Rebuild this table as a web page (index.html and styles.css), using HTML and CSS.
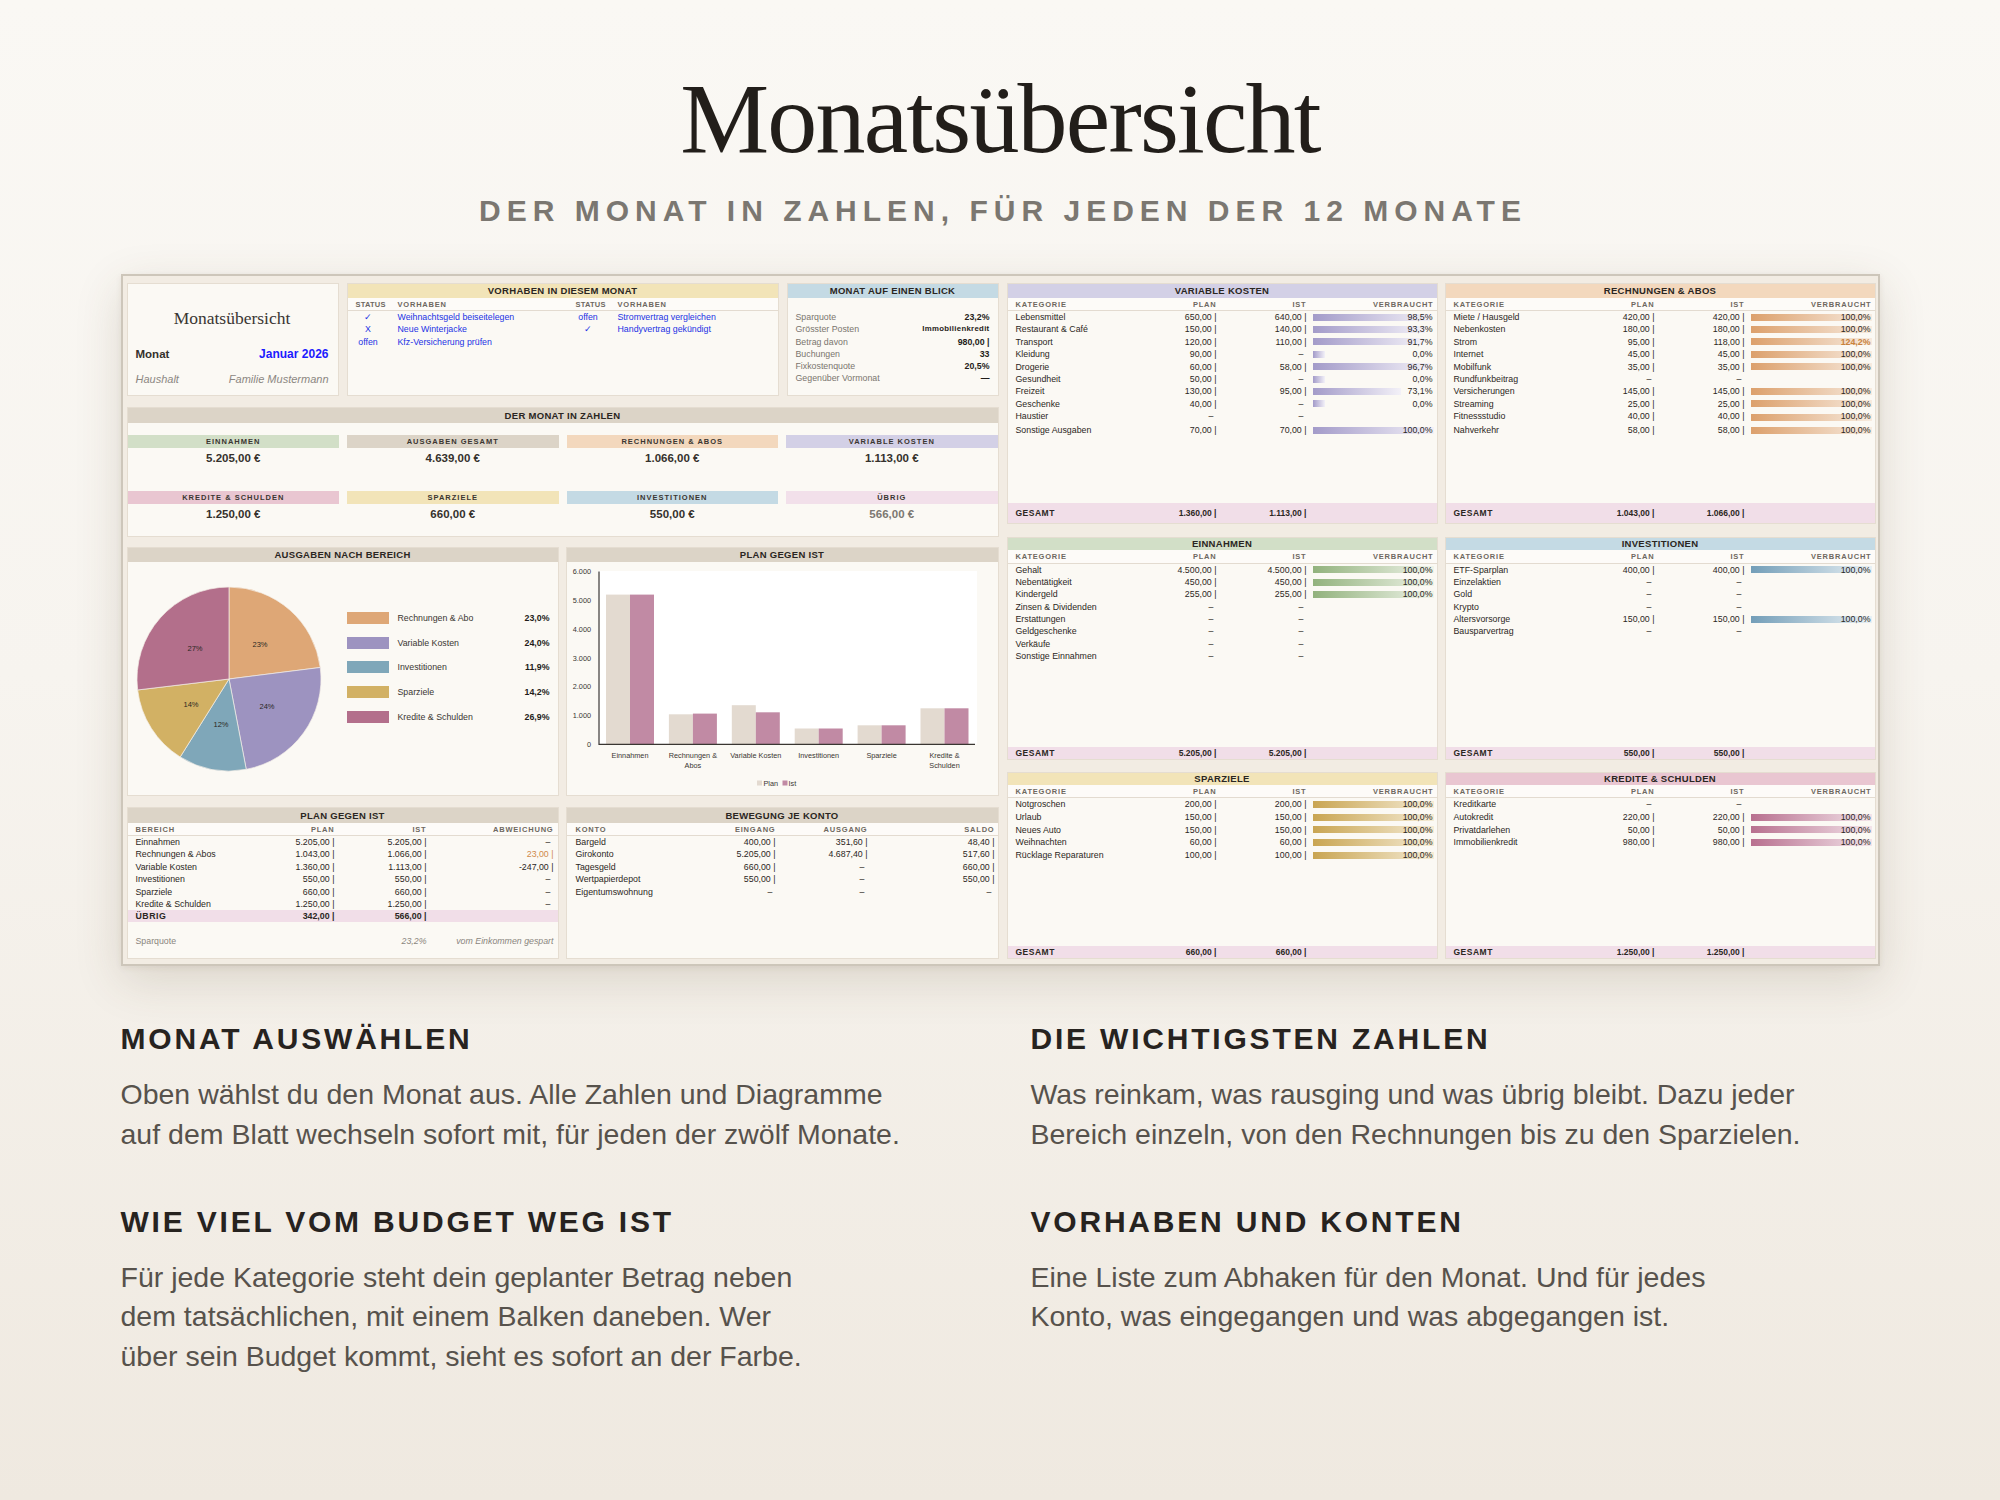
FILE: index.html
```html
<!DOCTYPE html>
<html lang="de">
<head>
<meta charset="utf-8">
<title>Monatsübersicht</title>
<link rel="stylesheet" href="styles.css">
</head>
<body>
<header class="hero">
  <h1 class="title">Monatsübersicht</h1>
  <p class="subtitle">DER MONAT IN ZAHLEN, FÜR JEDEN DER 12 MONATE</p>
</header>

<main class="sheet">
  <div class="left">
    <div class="row1">
      <section class="panel titlebox">
        <div class="tb-title">Monatsübersicht</div>
        <div class="tb-month"><span>Monat</span><span class="blue">Januar 2026</span></div>
        <div class="tb-house"><span>Haushalt</span><span>Familie Mustermann</span></div>
      </section>

      <section class="panel vorhaben">
        <div class="ph t-yel">VORHABEN IN DIESEM MONAT</div>
        <div class="vh-body">
          <div class="vh-half first">
            <div class="vh-row ch"><span class="st-h">STATUS</span><span>VORHABEN</span></div>
            <div class="vh-row"><span class="st">✓</span><span>Weihnachtsgeld beiseitelegen</span></div>
            <div class="vh-row"><span class="st">X</span><span>Neue Winterjacke</span></div>
            <div class="vh-row"><span class="st">offen</span><span>Kfz-Versicherung prüfen</span></div>
          </div>
          <div class="vh-half second">
            <div class="vh-row ch"><span class="st-h">STATUS</span><span>VORHABEN</span></div>
            <div class="vh-row"><span class="st">offen</span><span>Stromvertrag vergleichen</span></div>
            <div class="vh-row"><span class="st">✓</span><span>Handyvertrag gekündigt</span></div>
          </div>
        </div>
      </section>

      <section class="panel blick">
        <div class="ph t-blue">MONAT AUF EINEN BLICK</div>
        <div class="bl-body">
          <div class="bl-row"><span>Sparquote</span><b>23,2%</b></div>
          <div class="bl-row"><span>Grösster Posten</span><b class="small">Immobilienkredit</b></div>
          <div class="bl-row"><span>Betrag davon</span><b>980,00 |</b></div>
          <div class="bl-row"><span>Buchungen</span><b>33</b></div>
          <div class="bl-row"><span>Fixkostenquote</span><b>20,5%</b></div>
          <div class="bl-row"><span>Gegenüber Vormonat</span><b>—</b></div>
        </div>
      </section>
    </div>

    <section class="panel zahlen">
      <div class="ph big">DER MONAT IN ZAHLEN</div>
      <div class="cards">
        <div class="card"><div class="cl c-ein">EINNAHMEN</div><div class="cv">5.205,00 €</div></div>
        <div class="card"><div class="cl c-aus">AUSGABEN GESAMT</div><div class="cv">4.639,00 €</div></div>
        <div class="card"><div class="cl c-rech">RECHNUNGEN &amp; ABOS</div><div class="cv">1.066,00 €</div></div>
        <div class="card"><div class="cl c-var">VARIABLE KOSTEN</div><div class="cv">1.113,00 €</div></div>
        <div class="card"><div class="cl c-kred">KREDITE &amp; SCHULDEN</div><div class="cv">1.250,00 €</div></div>
        <div class="card"><div class="cl c-spar">SPARZIELE</div><div class="cv">660,00 €</div></div>
        <div class="card"><div class="cl c-inv">INVESTITIONEN</div><div class="cv">550,00 €</div></div>
        <div class="card"><div class="cl c-ueb">ÜBRIG</div><div class="cv muted">566,00 €</div></div>
      </div>
    </section>

    <div class="row2">
      <section class="panel ausgaben">
        <div class="ph">AUSGABEN NACH BEREICH</div>
        <div class="pie-body">
          <svg class="pie" viewBox="0 0 210 233" xmlns="http://www.w3.org/2000/svg">
            <g stroke="#f4eee6" stroke-width="0.7">
              <path d="M101,117 L101,25 A92,92 0 0 1 192.27,105.47 Z" fill="#dea776"/>
              <path d="M101,117 L192.27,105.47 A92,92 0 0 1 118.24,207.37 Z" fill="#9d93c0"/>
              <path d="M101,117 L118.24,207.37 A92,92 0 0 1 52.19,194.99 Z" fill="#7fa7b9"/>
              <path d="M101,117 L52.19,194.99 A92,92 0 0 1 9.66,127.96 Z" fill="#d2b164"/>
              <path d="M101,117 L9.66,127.96 A92,92 0 0 1 101,25 Z" fill="#b36f8b"/>
            </g>
            <g class="pie-lbl" text-anchor="middle">
              <text x="132" y="84.5">23%</text>
              <text x="139" y="146.5">24%</text>
              <text x="93" y="164.5">12%</text>
              <text x="63" y="144.5">14%</text>
              <text x="67" y="88.5">27%</text>
            </g>
          </svg>
          <ul class="legend">
            <li><i class="sw sw1"></i><span>Rechnungen &amp; Abo</span><b>23,0%</b></li>
            <li><i class="sw sw2"></i><span>Variable Kosten</span><b>24,0%</b></li>
            <li><i class="sw sw3"></i><span>Investitionen</span><b>11,9%</b></li>
            <li><i class="sw sw4"></i><span>Sparziele</span><b>14,2%</b></li>
            <li><i class="sw sw5"></i><span>Kredite &amp; Schulden</span><b>26,9%</b></li>
          </ul>
        </div>
      </section>

      <section class="panel chart">
        <div class="ph">PLAN GEGEN IST</div>
        <svg class="bars" viewBox="0 0 431 233" xmlns="http://www.w3.org/2000/svg">
          <rect x="31" y="9" width="379" height="173.3" fill="#ffffff"/>
          <g class="ax" text-anchor="end">
            <text x="24" y="12.2">6.000</text>
            <text x="24" y="41">5.000</text>
            <text x="24" y="69.7">4.000</text>
            <text x="24" y="98.5">3.000</text>
            <text x="24" y="127.3">2.000</text>
            <text x="24" y="156">1.000</text>
            <text x="24" y="184.8">0</text>
          </g>
          <g fill="#e3dad0">
            <rect x="39" y="32.6" width="24" height="149.7"/>
            <rect x="101.9" y="152.3" width="24" height="30"/>
            <rect x="164.8" y="143.2" width="24" height="39.1"/>
            <rect x="227.7" y="166.5" width="24" height="15.8"/>
            <rect x="290.6" y="163.3" width="24" height="19"/>
            <rect x="353.5" y="146.3" width="24" height="36"/>
          </g>
          <g fill="#c18aa4">
            <rect x="63" y="32.6" width="24" height="149.7"/>
            <rect x="125.9" y="151.6" width="24" height="30.7"/>
            <rect x="188.8" y="150.3" width="24" height="32"/>
            <rect x="251.7" y="166.5" width="24" height="15.8"/>
            <rect x="314.6" y="163.3" width="24" height="19"/>
            <rect x="377.5" y="146.3" width="24" height="36"/>
          </g>
          <path d="M32,9.5 V182.3 H408" fill="none" stroke="#3a3632" stroke-width="1.2"/>
          <g class="ax" text-anchor="middle">
            <text x="63" y="195.5">Einnahmen</text>
            <text x="125.9" y="195.5">Rechnungen &amp;</text>
            <text x="125.9" y="205.8">Abos</text>
            <text x="188.8" y="195.5">Variable Kosten</text>
            <text x="251.7" y="195.5">Investitionen</text>
            <text x="314.6" y="195.5">Sparziele</text>
            <text x="377.5" y="195.5">Kredite &amp;</text>
            <text x="377.5" y="205.8">Schulden</text>
          </g>
          <rect x="190" y="218.5" width="5" height="5" fill="#e3dad0"/>
          <text class="ax" x="196.5" y="223.8">Plan</text>
          <rect x="215.5" y="218.5" width="5" height="5" fill="#c18aa4"/>
          <text class="ax" x="221.5" y="223.8">Ist</text>
        </svg>
      </section>
    </div>

    <div class="row2">
      <section class="panel lt pgi">
        <div class="ph big">PLAN GEGEN IST</div>
        <div class="ch"><span>BEREICH</span><span class="r">PLAN</span><span class="r">IST</span><span class="r">ABWEICHUNG</span></div>
        <div class="tr"><span>Einnahmen</span><span class="r">5.205,00 |</span><span class="r">5.205,00 |</span><span class="r d">–</span></div>
        <div class="tr"><span>Rechnungen &amp; Abos</span><span class="r">1.043,00 |</span><span class="r">1.066,00 |</span><span class="r warn">23,00 |</span></div>
        <div class="tr"><span>Variable Kosten</span><span class="r">1.360,00 |</span><span class="r">1.113,00 |</span><span class="r">-247,00 |</span></div>
        <div class="tr"><span>Investitionen</span><span class="r">550,00 |</span><span class="r">550,00 |</span><span class="r d">–</span></div>
        <div class="tr"><span>Sparziele</span><span class="r">660,00 |</span><span class="r">660,00 |</span><span class="r d">–</span></div>
        <div class="tr"><span>Kredite &amp; Schulden</span><span class="r">1.250,00 |</span><span class="r">1.250,00 |</span><span class="r d">–</span></div>
        <div class="tr ub"><span>ÜBRIG</span><span class="r">342,00 |</span><span class="r">566,00 |</span><span></span></div>
        <div class="tr sq"><span>Sparquote</span><span></span><span class="r it">23,2%</span><span class="r it">vom Einkommen gespart</span></div>
      </section>

      <section class="panel lt konto">
        <div class="ph big">BEWEGUNG JE KONTO</div>
        <div class="ch"><span>KONTO</span><span class="r">EINGANG</span><span class="r">AUSGANG</span><span class="r">SALDO</span></div>
        <div class="tr"><span>Bargeld</span><span class="r">400,00 |</span><span class="r">351,60 |</span><span class="r">48,40 |</span></div>
        <div class="tr"><span>Girokonto</span><span class="r">5.205,00 |</span><span class="r">4.687,40 |</span><span class="r">517,60 |</span></div>
        <div class="tr"><span>Tagesgeld</span><span class="r">660,00 |</span><span class="r d">–</span><span class="r">660,00 |</span></div>
        <div class="tr"><span>Wertpapierdepot</span><span class="r">550,00 |</span><span class="r d">–</span><span class="r">550,00 |</span></div>
        <div class="tr"><span>Eigentumswohnung</span><span class="r d">–</span><span class="r d">–</span><span class="r d">–</span></div>
      </section>
    </div>
  </div>

  <div class="right">
    <section class="panel rt t-var top">
      <div class="ph">VARIABLE KOSTEN</div>
      <div class="ch"><span>KATEGORIE</span><span class="r">PLAN</span><span class="r">IST</span><span class="r">VERBRAUCHT</span></div>
      <div class="tr"><span>Lebensmittel</span><span class="r">650,00 |</span><span class="r">640,00 |</span><span class="vb"><i class="bar" style="width:98.5%"></i><em class="pct">98,5%</em></span></div>
      <div class="tr"><span>Restaurant &amp; Café</span><span class="r">150,00 |</span><span class="r">140,00 |</span><span class="vb"><i class="bar" style="width:93.3%"></i><em class="pct">93,3%</em></span></div>
      <div class="tr"><span>Transport</span><span class="r">120,00 |</span><span class="r">110,00 |</span><span class="vb"><i class="bar" style="width:91.7%"></i><em class="pct">91,7%</em></span></div>
      <div class="tr"><span>Kleidung</span><span class="r">90,00 |</span><span class="r d">–</span><span class="vb"><i class="bar" style="width:10%"></i><em class="pct">0,0%</em></span></div>
      <div class="tr"><span>Drogerie</span><span class="r">60,00 |</span><span class="r">58,00 |</span><span class="vb"><i class="bar" style="width:96.7%"></i><em class="pct">96,7%</em></span></div>
      <div class="tr"><span>Gesundheit</span><span class="r">50,00 |</span><span class="r d">–</span><span class="vb"><i class="bar" style="width:10%"></i><em class="pct">0,0%</em></span></div>
      <div class="tr"><span>Freizeit</span><span class="r">130,00 |</span><span class="r">95,00 |</span><span class="vb"><i class="bar" style="width:73.1%"></i><em class="pct">73,1%</em></span></div>
      <div class="tr"><span>Geschenke</span><span class="r">40,00 |</span><span class="r d">–</span><span class="vb"><i class="bar" style="width:10%"></i><em class="pct">0,0%</em></span></div>
      <div class="tr tall"><span>Haustier</span><span class="r d">–</span><span class="r d">–</span><span></span></div>
      <div class="tr tall"><span>Sonstige Ausgaben</span><span class="r">70,00 |</span><span class="r">70,00 |</span><span class="vb"><i class="bar" style="width:100%"></i><em class="pct">100,0%</em></span></div>
      <div class="sum"><span>GESAMT</span><span class="r">1.360,00 |</span><span class="r">1.113,00 |</span><span></span></div>
    </section>

    <section class="panel rt t-rech top">
      <div class="ph">RECHNUNGEN &amp; ABOS</div>
      <div class="ch"><span>KATEGORIE</span><span class="r">PLAN</span><span class="r">IST</span><span class="r">VERBRAUCHT</span></div>
      <div class="tr"><span>Miete / Hausgeld</span><span class="r">420,00 |</span><span class="r">420,00 |</span><span class="vb"><i class="bar" style="width:100%"></i><em class="pct">100,0%</em></span></div>
      <div class="tr"><span>Nebenkosten</span><span class="r">180,00 |</span><span class="r">180,00 |</span><span class="vb"><i class="bar" style="width:100%"></i><em class="pct">100,0%</em></span></div>
      <div class="tr"><span>Strom</span><span class="r">95,00 |</span><span class="r">118,00 |</span><span class="vb"><i class="bar" style="width:100%"></i><em class="pct over">124,2%</em></span></div>
      <div class="tr"><span>Internet</span><span class="r">45,00 |</span><span class="r">45,00 |</span><span class="vb"><i class="bar" style="width:100%"></i><em class="pct">100,0%</em></span></div>
      <div class="tr"><span>Mobilfunk</span><span class="r">35,00 |</span><span class="r">35,00 |</span><span class="vb"><i class="bar" style="width:100%"></i><em class="pct">100,0%</em></span></div>
      <div class="tr"><span>Rundfunkbeitrag</span><span class="r d">–</span><span class="r d">–</span><span></span></div>
      <div class="tr"><span>Versicherungen</span><span class="r">145,00 |</span><span class="r">145,00 |</span><span class="vb"><i class="bar" style="width:100%"></i><em class="pct">100,0%</em></span></div>
      <div class="tr"><span>Streaming</span><span class="r">25,00 |</span><span class="r">25,00 |</span><span class="vb"><i class="bar" style="width:100%"></i><em class="pct">100,0%</em></span></div>
      <div class="tr tall"><span>Fitnessstudio</span><span class="r">40,00 |</span><span class="r">40,00 |</span><span class="vb"><i class="bar" style="width:100%"></i><em class="pct">100,0%</em></span></div>
      <div class="tr tall"><span>Nahverkehr</span><span class="r">58,00 |</span><span class="r">58,00 |</span><span class="vb"><i class="bar" style="width:100%"></i><em class="pct">100,0%</em></span></div>
      <div class="sum"><span>GESAMT</span><span class="r">1.043,00 |</span><span class="r">1.066,00 |</span><span></span></div>
    </section>

    <section class="panel rt t-ein mid">
      <div class="ph">EINNAHMEN</div>
      <div class="ch"><span>KATEGORIE</span><span class="r">PLAN</span><span class="r">IST</span><span class="r">VERBRAUCHT</span></div>
      <div class="tr"><span>Gehalt</span><span class="r">4.500,00 |</span><span class="r">4.500,00 |</span><span class="vb"><i class="bar" style="width:100%"></i><em class="pct">100,0%</em></span></div>
      <div class="tr"><span>Nebentätigkeit</span><span class="r">450,00 |</span><span class="r">450,00 |</span><span class="vb"><i class="bar" style="width:100%"></i><em class="pct">100,0%</em></span></div>
      <div class="tr"><span>Kindergeld</span><span class="r">255,00 |</span><span class="r">255,00 |</span><span class="vb"><i class="bar" style="width:100%"></i><em class="pct">100,0%</em></span></div>
      <div class="tr"><span>Zinsen &amp; Dividenden</span><span class="r d">–</span><span class="r d">–</span><span></span></div>
      <div class="tr"><span>Erstattungen</span><span class="r d">–</span><span class="r d">–</span><span></span></div>
      <div class="tr"><span>Geldgeschenke</span><span class="r d">–</span><span class="r d">–</span><span></span></div>
      <div class="tr"><span>Verkäufe</span><span class="r d">–</span><span class="r d">–</span><span></span></div>
      <div class="tr"><span>Sonstige Einnahmen</span><span class="r d">–</span><span class="r d">–</span><span></span></div>
      <div class="sum"><span>GESAMT</span><span class="r">5.205,00 |</span><span class="r">5.205,00 |</span><span></span></div>
    </section>

    <section class="panel rt t-inv mid">
      <div class="ph">INVESTITIONEN</div>
      <div class="ch"><span>KATEGORIE</span><span class="r">PLAN</span><span class="r">IST</span><span class="r">VERBRAUCHT</span></div>
      <div class="tr"><span>ETF-Sparplan</span><span class="r">400,00 |</span><span class="r">400,00 |</span><span class="vb"><i class="bar" style="width:100%"></i><em class="pct">100,0%</em></span></div>
      <div class="tr"><span>Einzelaktien</span><span class="r d">–</span><span class="r d">–</span><span></span></div>
      <div class="tr"><span>Gold</span><span class="r d">–</span><span class="r d">–</span><span></span></div>
      <div class="tr"><span>Krypto</span><span class="r d">–</span><span class="r d">–</span><span></span></div>
      <div class="tr"><span>Altersvorsorge</span><span class="r">150,00 |</span><span class="r">150,00 |</span><span class="vb"><i class="bar" style="width:100%"></i><em class="pct">100,0%</em></span></div>
      <div class="tr"><span>Bausparvertrag</span><span class="r d">–</span><span class="r d">–</span><span></span></div>
      <div class="sum"><span>GESAMT</span><span class="r">550,00 |</span><span class="r">550,00 |</span><span></span></div>
    </section>

    <section class="panel rt t-spar low">
      <div class="ph">SPARZIELE</div>
      <div class="ch"><span>KATEGORIE</span><span class="r">PLAN</span><span class="r">IST</span><span class="r">VERBRAUCHT</span></div>
      <div class="tr"><span>Notgroschen</span><span class="r">200,00 |</span><span class="r">200,00 |</span><span class="vb"><i class="bar" style="width:100%"></i><em class="pct">100,0%</em></span></div>
      <div class="tr"><span>Urlaub</span><span class="r">150,00 |</span><span class="r">150,00 |</span><span class="vb"><i class="bar" style="width:100%"></i><em class="pct">100,0%</em></span></div>
      <div class="tr"><span>Neues Auto</span><span class="r">150,00 |</span><span class="r">150,00 |</span><span class="vb"><i class="bar" style="width:100%"></i><em class="pct">100,0%</em></span></div>
      <div class="tr"><span>Weihnachten</span><span class="r">60,00 |</span><span class="r">60,00 |</span><span class="vb"><i class="bar" style="width:100%"></i><em class="pct">100,0%</em></span></div>
      <div class="tr"><span>Rücklage Reparaturen</span><span class="r">100,00 |</span><span class="r">100,00 |</span><span class="vb"><i class="bar" style="width:100%"></i><em class="pct">100,0%</em></span></div>
      <div class="sum"><span>GESAMT</span><span class="r">660,00 |</span><span class="r">660,00 |</span><span></span></div>
    </section>

    <section class="panel rt t-kred low">
      <div class="ph">KREDITE &amp; SCHULDEN</div>
      <div class="ch"><span>KATEGORIE</span><span class="r">PLAN</span><span class="r">IST</span><span class="r">VERBRAUCHT</span></div>
      <div class="tr"><span>Kreditkarte</span><span class="r d">–</span><span class="r d">–</span><span></span></div>
      <div class="tr"><span>Autokredit</span><span class="r">220,00 |</span><span class="r">220,00 |</span><span class="vb"><i class="bar" style="width:100%"></i><em class="pct">100,0%</em></span></div>
      <div class="tr"><span>Privatdarlehen</span><span class="r">50,00 |</span><span class="r">50,00 |</span><span class="vb"><i class="bar" style="width:100%"></i><em class="pct">100,0%</em></span></div>
      <div class="tr"><span>Immobilienkredit</span><span class="r">980,00 |</span><span class="r">980,00 |</span><span class="vb"><i class="bar" style="width:100%"></i><em class="pct">100,0%</em></span></div>
      <div class="sum"><span>GESAMT</span><span class="r">1.250,00 |</span><span class="r">1.250,00 |</span><span></span></div>
    </section>
  </div>
</main>

<section class="features">
  <div class="feat">
    <h3>MONAT AUSWÄHLEN</h3>
    <p>Oben wählst du den Monat aus. Alle Zahlen und Diagramme<br>auf dem Blatt wechseln sofort mit, für jeden der zwölf Monate.</p>
  </div>
  <div class="feat">
    <h3>DIE WICHTIGSTEN ZAHLEN</h3>
    <p>Was reinkam, was rausging und was übrig bleibt. Dazu jeder<br>Bereich einzeln, von den Rechnungen bis zu den Sparzielen.</p>
  </div>
  <div class="feat">
    <h3>WIE VIEL VOM BUDGET WEG IST</h3>
    <p>Für jede Kategorie steht dein geplanter Betrag neben<br>dem tatsächlichen, mit einem Balken daneben. Wer<br>über sein Budget kommt, sieht es sofort an der Farbe.</p>
  </div>
  <div class="feat">
    <h3>VORHABEN UND KONTEN</h3>
    <p>Eine Liste zum Abhaken für den Monat. Und für jedes<br>Konto, was eingegangen und was abgegangen ist.</p>
  </div>
</section>
</body>
</html>
```

FILE: styles.css
```css
* { box-sizing: border-box; }
html, body { margin: 0; padding: 0; }
body {
  width: 2000px;
  min-height: 1500px;
  background: linear-gradient(180deg, #faf8f4 0%, #f7f4ef 45%, #efe9e0 100%);
  font-family: "Liberation Sans", Arial, sans-serif;
  color: #2b2723;
}

/* ---------- hero ---------- */
.hero { padding-top: 69px; text-align: center; }
.title {
  margin: 0;
  font-family: "Liberation Serif", "Times New Roman", serif;
  font-weight: 400;
  font-size: 100px;
  line-height: 100px;
  letter-spacing: -1.8px;
  color: #221e1a;
}
.subtitle {
  margin: 27px 0 0;
  padding-left: 6px;
  font-weight: 700;
  font-size: 30px;
  line-height: 30px;
  letter-spacing: 6px;
  color: #7b7771;
}

/* ---------- sheet ---------- */
.sheet {
  width: 1759px;
  height: 692px;
  margin: 48px auto 0;
  border: 2px solid #cdc6ba;
  background: #f2ece3;
  padding: 7px 2px 5px 4px;
  display: flex;
  gap: 8px;
  box-shadow: 0 14px 44px rgba(90, 70, 40, 0.16), 0 2px 6px rgba(90, 70, 40, 0.08);
  font-size: 8.8px;
}
.left {
  width: 872px;
  display: grid;
  grid-template-rows: 113px 130px 249px 152px;
  row-gap: 10.67px;
}
.right {
  width: 869px;
  display: grid;
  grid-template-columns: 431px 431px;
  column-gap: 7px;
  grid-template-rows: 241px 223px 187px;
  row-gap: 12.5px;
}
.row1 { display: grid; grid-template-columns: 212px 432px 212px; column-gap: 8px; }
.row2 { display: grid; grid-template-columns: 432px 433px; column-gap: 7px; }

.panel {
  background: #fbf9f4;
  border: 1px solid #e5ddd1;
  display: flex;
  flex-direction: column;
  overflow: hidden;
  min-height: 0;
}
.ph {
  flex: none;
  height: 14px;
  line-height: 14px;
  text-align: center;
  font-weight: 700;
  font-size: 9.5px;
  letter-spacing: 0.3px;
  color: #2a2622;
  background: #dcd4c7;
  white-space: nowrap;
}
.ph.big { height: 15px; line-height: 15px; }
.t-yel { background: #f2e4b8; }
.t-blue { background: #c4dae4; }

.ch {
  flex: none;
  height: 13px;
  line-height: 13px;
  font-weight: 700;
  font-size: 7.5px;
  letter-spacing: 0.8px;
  color: #6e6860;
  background: #fdfbf8;
  border-bottom: 1px solid #e3dbd0;
  white-space: nowrap;
}
.tr {
  flex: none;
  height: 12.4px;
  line-height: 12.4px;
  font-size: 8.8px;
  color: #2b2723;
  white-space: nowrap;
}
.r { text-align: right; }
.d { padding-right: 3px; }

/* ---------- title box ---------- */
.titlebox { padding: 24px 9px 0 8px; }
.tb-title {
  font-family: "Liberation Serif", serif;
  font-size: 17.5px;
  line-height: 20px;
  text-align: center;
  color: #3a3632;
}
.tb-month {
  margin-top: 18px;
  display: flex;
  justify-content: space-between;
  line-height: 16px;
  font-weight: 700;
  font-size: 11.5px;
  color: #35312c;
}
.tb-month .blue { color: #1b1bff; font-size: 12px; }
.tb-house {
  margin-top: 10px;
  display: flex;
  justify-content: space-between;
  line-height: 14px;
  font-style: italic;
  font-size: 11px;
  color: #8c8782;
}

/* ---------- vorhaben ---------- */
.vh-body { display: flex; }
.vh-half.first { width: 219px; }
.vh-half.second { flex: 1; }
.vh-row {
  display: grid;
  grid-template-columns: 32px 1fr;
  column-gap: 10px;
  padding-left: 8px;
  height: 12.4px;
  line-height: 12.4px;
  font-size: 8.8px;
  color: #2232e4;
  white-space: nowrap;
}
.vh-half.second .vh-row { padding-left: 9px; }
.vh-row.ch { height: 13px; line-height: 13px; color: #6e6860; font-size: 7.5px; }
.st-h { letter-spacing: 0.2px; }
.st { text-align: center; padding-right: 7px; }

/* ---------- blick ---------- */
.bl-body { padding: 13px 8px 0 8px; }
.bl-row {
  display: flex;
  justify-content: space-between;
  height: 12.3px;
  line-height: 12.3px;
  font-size: 8.8px;
  color: #7a756e;
}
.bl-row b { color: #1f1c19; font-weight: 700; }
.bl-row b.small { font-size: 7.8px; letter-spacing: 0.3px; }

/* ---------- zahlen ---------- */
.cards {
  display: grid;
  grid-template-columns: repeat(4, 1fr);
  column-gap: 8px;
  row-gap: 11px;
  padding-top: 12px;
}
.card { height: 45px; }
.cl {
  height: 13px;
  line-height: 13px;
  font-size: 7.5px;
  font-weight: 700;
  letter-spacing: 1px;
  text-align: center;
  color: #3b3631;
}
.cv {
  line-height: 20px;
  text-align: center;
  font-weight: 700;
  font-size: 11.5px;
  color: #35312c;
}
.cv.muted { color: #7d7872; }
.c-ein { background: #d2dfc7; }
.c-aus { background: #dcd4c7; }
.c-rech { background: #f3d8bd; }
.c-var { background: #d3d0e6; }
.c-kred { background: #e9c6d1; }
.c-spar { background: #f2e4b8; }
.c-inv { background: #c4dae4; }
.c-ueb { background: #f2e0ea; }

/* ---------- pie ---------- */
.pie-body { display: flex; }
.pie { width: 210px; height: 233px; flex: none; display: block; }
.pie-lbl { font-family: "Liberation Sans", Arial, sans-serif; font-size: 7.5px; fill: #2b2723; }
.legend {
  list-style: none;
  margin: 0;
  padding: 43.7px 8px 0 9px;
  flex: 1;
}
.legend li {
  display: grid;
  grid-template-columns: 42px 1fr auto;
  column-gap: 9px;
  align-items: center;
  height: 24.6px;
  font-size: 8.8px;
  color: #3a3632;
}
.legend b { color: #1f1c19; }
.sw { display: block; height: 12px; }
.sw1 { background: #dea776; }
.sw2 { background: #9d93c0; }
.sw3 { background: #7fa7b9; }
.sw4 { background: #d2b164; }
.sw5 { background: #b36f8b; }

/* ---------- bar chart ---------- */
.bars { display: block; width: 431px; height: 233px; }
.ax { font-family: "Liberation Sans", Arial, sans-serif; font-size: 7.3px; fill: #3a3632; }

/* ---------- left tables ---------- */
.lt .ch, .lt .tr {
  display: grid;
  grid-template-columns: 131px 68px 92px 1fr;
  padding: 0 4px 0 8px;
}
.konto .ch, .konto .tr {
  grid-template-columns: 131px 69px 92px 1fr;
  padding: 0 3px 0 9px;
}
.warn { color: #d08a4a; }
.tr.ub { height: 12px; line-height: 12px; background: #f1dee8; font-weight: 700; }
.tr.ub span:first-child { letter-spacing: 0.5px; }
.tr.sq { margin-top: 12.5px; color: #8a857e; }
.it { font-style: italic; }

/* ---------- right tables ---------- */
.rt .ch, .rt .tr, .rt .sum {
  display: grid;
  grid-template-columns: 132px 69px 90px 1fr;
  padding: 0 3px 0 8px;
}
.rt.mid .ph, .rt.low .ph { height: 12px; line-height: 12px; }
.rt.mid .ch { height: 14px; line-height: 14px; }
.rt.low .tr { height: 12.75px; line-height: 12.75px; }
.rt .tr.tall { height: 13.8px; line-height: 13.8px; }
.vb {
  display: grid;
  align-items: center;
  margin-left: 6px;
}
.vb > * { grid-area: 1 / 1; }
.bar {
  display: block;
  height: 7px;
  background: linear-gradient(90deg, var(--bd), var(--bl));
}
.pct { font-style: normal; text-align: right; padding-right: 1px; }
.pct.over { color: #c8823e; font-weight: 700; }
.sum {
  margin-top: auto;
  flex: none;
  height: 12px;
  line-height: 12px;
  background: #f1dee8;
  font-weight: 700;
  font-size: 8.5px;
  color: #2b2723;
}
.rt.top .sum { height: 20px; line-height: 20px; }
.sum span:first-child { letter-spacing: 0.5px; }

.t-var { --bd: #a39bc9; --bl: #f3f1f8; }
.t-var .ph { background: #d3d0e6; }
.t-rech { --bd: #dca06c; --bl: #f7ebdf; }
.t-rech .ph { background: #f3d8bd; }
.t-ein { --bd: #92b27d; --bl: #f0f4ea; }
.t-ein .ph { background: #d2dfc7; }
.t-inv { --bd: #739eb8; --bl: #e8f0f4; }
.t-inv .ph { background: #c4dae4; }
.t-spar { --bd: #c9a552; --bl: #f5ecd6; }
.t-spar .ph { background: #f2e4b8; }
.t-kred { --bd: #b8708f; --bl: #f3e4ea; }
.t-kred .ph { background: #e9c6d1; }

/* ---------- features ---------- */
.features {
  width: 1759px;
  margin: 55px auto 0;
  display: grid;
  grid-template-columns: 910px 1fr;
  row-gap: 49.6px;
}
.feat h3 {
  margin: 0;
  font-weight: 700;
  font-size: 30px;
  line-height: 36px;
  letter-spacing: 2.8px;
  color: #27231f;
}
.feat p {
  margin: 18px 0 0;
  font-size: 28.5px;
  line-height: 39.5px;
  color: #57524c;
}
```
